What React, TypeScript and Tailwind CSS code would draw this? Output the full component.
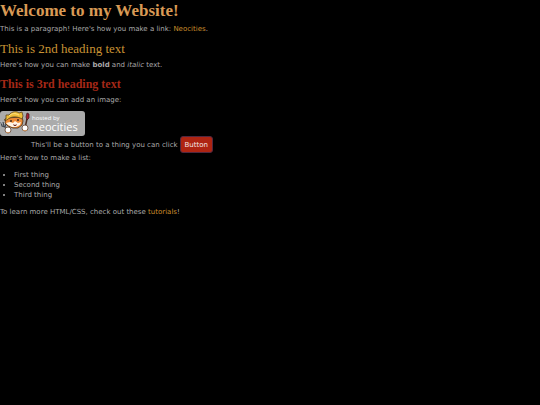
function HostedBadge() {
  return (
    <svg viewBox="0 0 85 25" className="block h-[25px] w-[85px]" role="img" aria-label="Hosted by Neocities">
      <rect width="85" height="25" rx="3" fill="#ababab" />
      {/* fork */}
      <path d="M1 11l1 4 3 1 1-3M3 11l1 4M4 15l4 5" fill="none" stroke="#3d4550" strokeWidth="1.1" />
      <path d="M1 10l1 3M4 10l1 3" stroke="#d9dde2" strokeWidth=".6" />
      {/* brush */}
      <path d="M27 8l-2 9" stroke="#4a2a1c" strokeWidth="1.5" />
      <path d="M26 6l1-4 2 1v4l-2 2z" fill="#a51f30" stroke="#3b1717" strokeWidth=".7" />
      {/* head */}
      <path d="M6 7l-1 5 3 3 5 2h5l4-3 1-4-1-4z" fill="#ee8b35" stroke="#4a2d12" strokeWidth=".8" />
      <path d="M6 12l4-1 3 1 2-2 3 2 3-1-1 3-4 2h-4l-4-2z" fill="#fff4e4" />
      {/* hard hat */}
      <path d="M6 8L6 4l3 0C12 0 17 0 19 2l3-1 1 4-1 3C17 5 11 5 7 9L4 9z" fill="#efbd38" stroke="#5d461a" strokeWidth=".8" />
      <path d="M9 5c3-3 6-3 10-1" fill="none" stroke="#ffe98c" strokeWidth=".9" />
      <path d="M11 9v2M18 8v2" stroke="#241c19" strokeWidth="1.3" />
      <path d="M13 13l2 1 2-1-1 2h-2z" fill="#78302a" />
      {/* paws */}
      <circle cx="8" cy="19" r="3" fill="#fff" stroke="#62402b" strokeWidth=".8" />
      <path d="M6 21c1 1 3 1 4 0" fill="none" stroke="#dc9756" strokeWidth=".8" />
      <circle cx="25" cy="17" r="3" fill="#fff" stroke="#62402b" strokeWidth=".8" />
      <path d="M23 19c1 1 3 1 4 0" fill="none" stroke="#dc9756" strokeWidth=".8" />
      <text x="32" y="9" fill="#fff" fontSize="6" fontFamily="'Open Sans', sans-serif">hosted by</text>
      <text x="32" y="20" fill="#fff" fontSize="11" fontFamily="'Open Sans', sans-serif">neocities</text>
    </svg>
  );
}

export default function App() {
  return (
    <main className="min-h-screen bg-black font-['DejaVu_Sans',sans-serif] text-[7px] leading-[10px] text-[#aaaaaa]">
      <h1 className="font-['Liberation_Serif',serif] text-[17px] leading-[22px] font-bold text-[#d99a55]">
        Welcome to my Website!
      </h1>
      <p className="mt-0.5">
        This is a paragraph! Here's how you make a link:{" "}
        <a href="https://neocities.org" className="text-[#ca8c2a]">Neocities</a>.
      </p>
      <h2 className="mt-1 font-['Liberation_Serif',serif] text-[13px] leading-[22px] text-[#c99334]">
        This is 2nd heading text
      </h2>
      <p>
        Here's how you can make <strong>bold</strong> and <em>italic</em> text.
      </p>
      <h3 className="mt-1 font-['Liberation_Serif',serif] text-[12px] leading-5 font-bold text-[#a52817]">
        This is 3rd heading text
      </h3>
      <p className="mt-px">Here's how you can add an image:</p>
      <div className="mt-1.5">
        <HostedBadge />
      </div>
      <div className="flex w-[213px] items-center justify-end gap-0.5">
        <span>This'll be a button to a thing you can click</span>
        <button type="button" className="h-[17px] rounded-[3px] border border-[#4f2840] bg-[#ae2412] px-1 text-[#f4e6e3]">
          Button
        </button>
      </div>
      <p>Here's how to make a list:</p>
      <ul className="my-[7px] list-disc pl-3.5">
        <li>First thing</li>
        <li>Second thing</li>
        <li>Third thing</li>
      </ul>
      <p>
        To learn more HTML/CSS, check out these{" "}
        <a href="https://neocities.org/tutorials" className="text-[#ca8c2a]">tutorials</a>!
      </p>
    </main>
  );
}
